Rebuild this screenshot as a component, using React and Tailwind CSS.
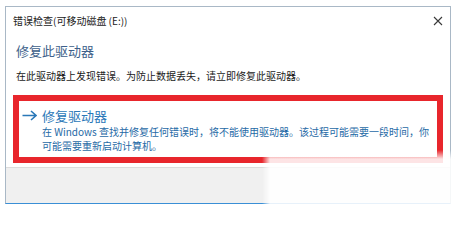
import React from "react";

const font = { fontFamily: '"Noto Sans CJK SC", "Noto Sans", sans-serif' };

function CloseIcon() {
  return (
    <svg width="10" height="10" viewBox="0 0 10 10" fill="none" stroke="#3a3a3a" strokeWidth="1.1">
      <path d="M1 1L9 9M9 1L1 9" />
    </svg>
  );
}

function ArrowIcon() {
  return (
    <svg width="15" height="11" viewBox="0 0 15 11" fill="none" stroke="#2a78b8" strokeWidth="1.6">
      <path d="M0.5 5.5H14M9 1L14 5.5L9 10" />
    </svg>
  );
}

export default function App() {
  return (
    <div
      className="relative w-[456px] h-[213px] overflow-hidden bg-white pt-[6px] pl-[5px]"
      style={font}
    >
      {/* window */}
      <div className="flex h-[198px] w-[446px] flex-col border border-[#a9b8c6] border-b-[#3a8fd6] bg-white">
        {/* title bar */}
        <div className="flex h-[27px] shrink-0 items-center justify-between pl-[7px] pr-[7px]">
          <span className="text-[10px] leading-none text-[#222]">错误检查(可移动磁盘 (E:))</span>
          <CloseIcon />
        </div>

        <div className="flex-1 px-[10px] pt-[7px]">
          <h2 className="text-[13px] leading-[19px] text-[#3d5f8a]">修复此驱动器</h2>
          <p className="mt-[9px] text-[10px] leading-[14px] text-[#1a1a1a]">
            在此驱动器上发现错误。为防止数据丢失，请立即修复此驱动器。
          </p>
        </div>

        {/* highlighted option */}
        <div className="mx-[7px] mb-[4px] flex h-[68px] shrink-0 border-[6px] border-[#e8262c] bg-white pl-[3px] pt-[5px]">
          <div className="pt-[4px]">
            <ArrowIcon />
          </div>
          <div className="ml-[5px] flex flex-col">
            <span className="text-[13px] leading-[19px] text-[#2a78b8]">修复驱动器</span>
            <span className="text-[10px] leading-[14px] text-[#1f6aa6]">
              在 Windows 查找并修复任何错误时，将不能使用驱动器。该过程可能需要一段时间，你
            </span>
            <span className="text-[10px] leading-[14px] text-[#1f6aa6]">可能需要重新启动计算机。</span>
          </div>
        </div>

        {/* footer */}
        <div className="h-[36px] shrink-0 border-t border-[#dcdcdc] bg-[#f0f0f0]" />
      </div>

      {/* faded watermark area */}
      <div className="pointer-events-none absolute bottom-0 left-[262px] right-0 top-[150px] bg-[linear-gradient(to_bottom,rgba(255,255,255,0),rgba(255,255,255,0.88)_9px)] [mask-image:linear-gradient(to_right,transparent,black_8px)]" />
    </div>
  );
}
